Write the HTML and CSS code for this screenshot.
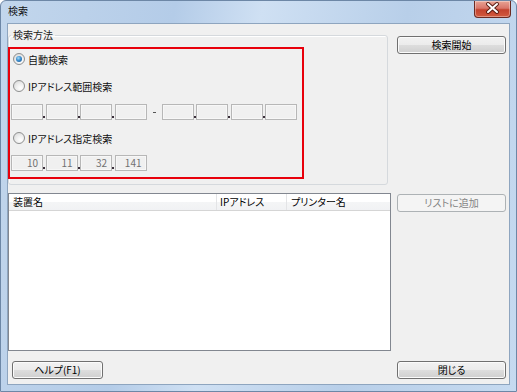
FILE: index.html
```html
<!DOCTYPE html>
<html lang="ja">
<head>
    <meta charset="UTF-8">
    <title>検索</title>
    <link rel="stylesheet" href="styles.css">
</head>
<body>
    <div class="window">
        <!-- タイトルバー -->
        <div class="titlebar">
            <span class="title">検索</span>
            <div class="close-btn">
                <svg width="37" height="17" viewBox="0 0 37 17">
                    <path d="M14 4 L23 12 M23 4 L14 12" stroke="#5a1d14" stroke-width="4" stroke-linecap="round"/>
                    <path d="M14 4 L23 12 M23 4 L14 12" stroke="#ffffff" stroke-width="2" stroke-linecap="round"/>
                </svg>
            </div>
        </div>

        <div class="client">
            <!-- 検索方法 -->
            <fieldset class="group">
                <legend>検索方法</legend>
                <div class="highlight">
                    <div class="radio-row"><span class="radio checked"></span>自動検索</div>
                    <div class="radio-row gap7"><span class="radio"></span>IPアドレス範囲検索</div>
                    <div class="ip-row gap8">
                        <div class="ip">
                            <span class="ip-box"></span><span class="ip-dot"></span>
                            <span class="ip-box"></span><span class="ip-dot"></span>
                            <span class="ip-box"></span><span class="ip-dot"></span>
                            <span class="ip-box"></span>
                        </div>
                        <span class="dash"></span>
                        <div class="ip">
                            <span class="ip-box"></span><span class="ip-dot"></span>
                            <span class="ip-box"></span><span class="ip-dot"></span>
                            <span class="ip-box"></span><span class="ip-dot"></span>
                            <span class="ip-box"></span>
                        </div>
                    </div>
                    <div class="radio-row gap8"><span class="radio"></span>IPアドレス指定検索</div>
                    <div class="ip-row gap7">
                        <div class="ip">
                            <span class="ip-box">10</span><span class="ip-dot"></span>
                            <span class="ip-box">11</span><span class="ip-dot"></span>
                            <span class="ip-box">32</span><span class="ip-dot"></span>
                            <span class="ip-box">141</span>
                        </div>
                    </div>
                </div>
            </fieldset>
            <button class="btn btn-search">検索開始</button>

            <!-- 装置リスト -->
            <div class="list">
                <div class="list-header">
                    <div class="col col-name">装置名</div>
                    <div class="col col-ip">IPアドレス</div>
                    <div class="col col-printer">プリンター名</div>
                </div>
            </div>
            <button class="btn btn-add" disabled>リストに追加</button>

            <button class="btn btn-help">ヘルプ(F1)</button>
            <button class="btn btn-close">閉じる</button>
        </div>
    </div>
</body>
</html>
```

FILE: styles.css
```css
* {
    box-sizing: border-box;
}

body {
    margin: 0;
    font-family: "Noto Sans CJK JP", "Noto Sans", sans-serif;
    font-size: 10px;
    font-feature-settings: "palt";
    color: #000;
}

/* ウィンドウ枠 */
.window {
    width: 517px;
    height: 392px;
    display: flex;
    flex-direction: column;
    border: 1px solid #6d87a6;
    border-radius: 6px 6px 0 0;
    background: linear-gradient(100deg, #c2d6ec 0%, #b4cce8 30%, #cfe0f3 45%, #b8cfe9 70%, #c6daf0 100%);
}

.titlebar {
    height: 22px;
    display: flex;
    align-items: flex-start;
    padding-left: 7px;
}

.title {
    line-height: 20px;
    color: #111;
}

.close-btn {
    width: 37px;
    height: 17px;
    margin-left: auto;
    margin-right: 5px;
    border: 1px solid #6b2a22;
    border-top: none;
    border-radius: 0 0 4px 4px;
    background: linear-gradient(to bottom, #e8a495 0%, #d9766a 45%, #c3422e 55%, #d25a3e 100%);
    box-shadow: inset 0 0 0 1px rgba(255, 255, 255, 0.35);
}

.close-btn svg {
    display: block;
    margin: -1px 0 0 -1px;
}

/* クライアント領域 */
.client {
    flex: 1;
    margin: 0 6px 6px;
    border: 1px solid #8ea5bf;
    background-color: #f0f0f0;
    padding-top: 4px;
    display: grid;
    grid-template-columns: 383px 109px;
    column-gap: 6px;
    align-items: start;
    align-content: start;
}

/* グループボックス */
.group {
    grid-column: 1;
    grid-row: 1;
    width: 380px;
    height: 157px;
    margin: 0;
    padding: 0;
    min-width: 0;
    border: 1px solid #d5d9dd;
    border-radius: 3px;
    box-shadow: inset 1px 1px 0 #fff;
}

.group legend {
    margin-left: 2px;
    padding: 0 2px;
    line-height: 14px;
    color: #1e1e1e;
}

.highlight {
    width: 296px;
    height: 132px;
    margin: 5px 0 0 -1px;
    border: 2px solid #e8000b;
    padding-left: 1px;
}

.radio-row {
    height: 20px;
    display: flex;
    align-items: center;
    gap: 2px;
    padding-left: 2px;
    color: #111;
}

.gap7 {
    margin-top: 7px;
}

.gap8 {
    margin-top: 8px;
}

.radio {
    width: 12px;
    height: 12px;
    margin-right: 1px;
    border-radius: 50%;
    border: 1px solid #8e8f8f;
    background: radial-gradient(circle at 65% 70%, #ffffff 0%, #eeeeee 45%, #d2d2d2 100%);
    display: flex;
    align-items: center;
    justify-content: center;
}

.radio.checked::after {
    content: "";
    width: 6px;
    height: 6px;
    border-radius: 50%;
    background: radial-gradient(circle at 40% 35%, #a4dcf8 0%, #3d8fd0 45%, #134d87 100%);
}

/* IPアドレス入力 */
.ip-row {
    height: 16px;
    display: flex;
}

.ip {
    display: flex;
}

.ip-box {
    width: 32px;
    height: 16px;
    border: 1px solid #b7b7b7;
    background-color: #f0f0f0;
    box-shadow: inset 0 0 0 1px #f7f7f7;
    text-align: right;
    padding-right: 4px;
    line-height: 14px;
    color: #707070;
}

.ip-dot {
    width: 2.5px;
    height: 16px;
    position: relative;
}

.ip-dot::after {
    content: "";
    position: absolute;
    left: 0;
    bottom: 2px;
    width: 2px;
    height: 2px;
    background-color: #3a2e3a;
}

.dash {
    width: 15px;
    position: relative;
}

.dash::after {
    content: "";
    position: absolute;
    left: 6px;
    top: 8px;
    width: 3px;
    height: 1px;
    background-color: #555;
}

/* ボタン */
.btn {
    height: 18px;
    padding: 0;
    font-family: inherit;
    font-size: 10px;
    font-feature-settings: "palt";
    color: #000;
    border: 1px solid #707070;
    border-radius: 3px;
    background: linear-gradient(to bottom, #f2f2f2 0%, #ebebeb 50%, #dddddd 51%, #cfcfcf 100%);
    box-shadow: inset 0 0 0 1px #fbfbfb;
    line-height: 16px;
}

.btn-search {
    grid-column: 2;
    grid-row: 1;
    width: 109px;
    margin-top: 8px;
}

.btn-add {
    grid-column: 2;
    grid-row: 2;
    width: 109px;
    margin-top: 9px;
    border-color: #adb2b5;
    background: #f4f4f4;
    box-shadow: none;
    color: #838383;
}

.btn-help {
    grid-column: 1;
    grid-row: 3;
    width: 91px;
    margin: 10px 0 0 4px;
}

.btn-close {
    grid-column: 2;
    grid-row: 3;
    width: 109px;
    margin-top: 10px;
}

/* リスト */
.list {
    grid-column: 1;
    grid-row: 2;
    width: 383px;
    height: 158px;
    margin-top: 8px;
    border: 1px solid #828790;
    background-color: #fff;
}

.list-header {
    height: 17px;
    display: flex;
    background: linear-gradient(to bottom, #ffffff 0%, #ffffff 50%, #f4f5f6 51%, #f1f2f4 100%);
    border-bottom: 1px solid #d5d5d5;
}

.col {
    line-height: 16px;
}

.col-name {
    width: 208px;
    padding-left: 4px;
    border-right: 1px solid #e3e4e6;
}

.col-ip {
    width: 70px;
    padding-left: 3px;
    border-right: 1px solid #e3e4e6;
}

.col-printer {
    flex: 1;
    padding-left: 4px;
}
```
